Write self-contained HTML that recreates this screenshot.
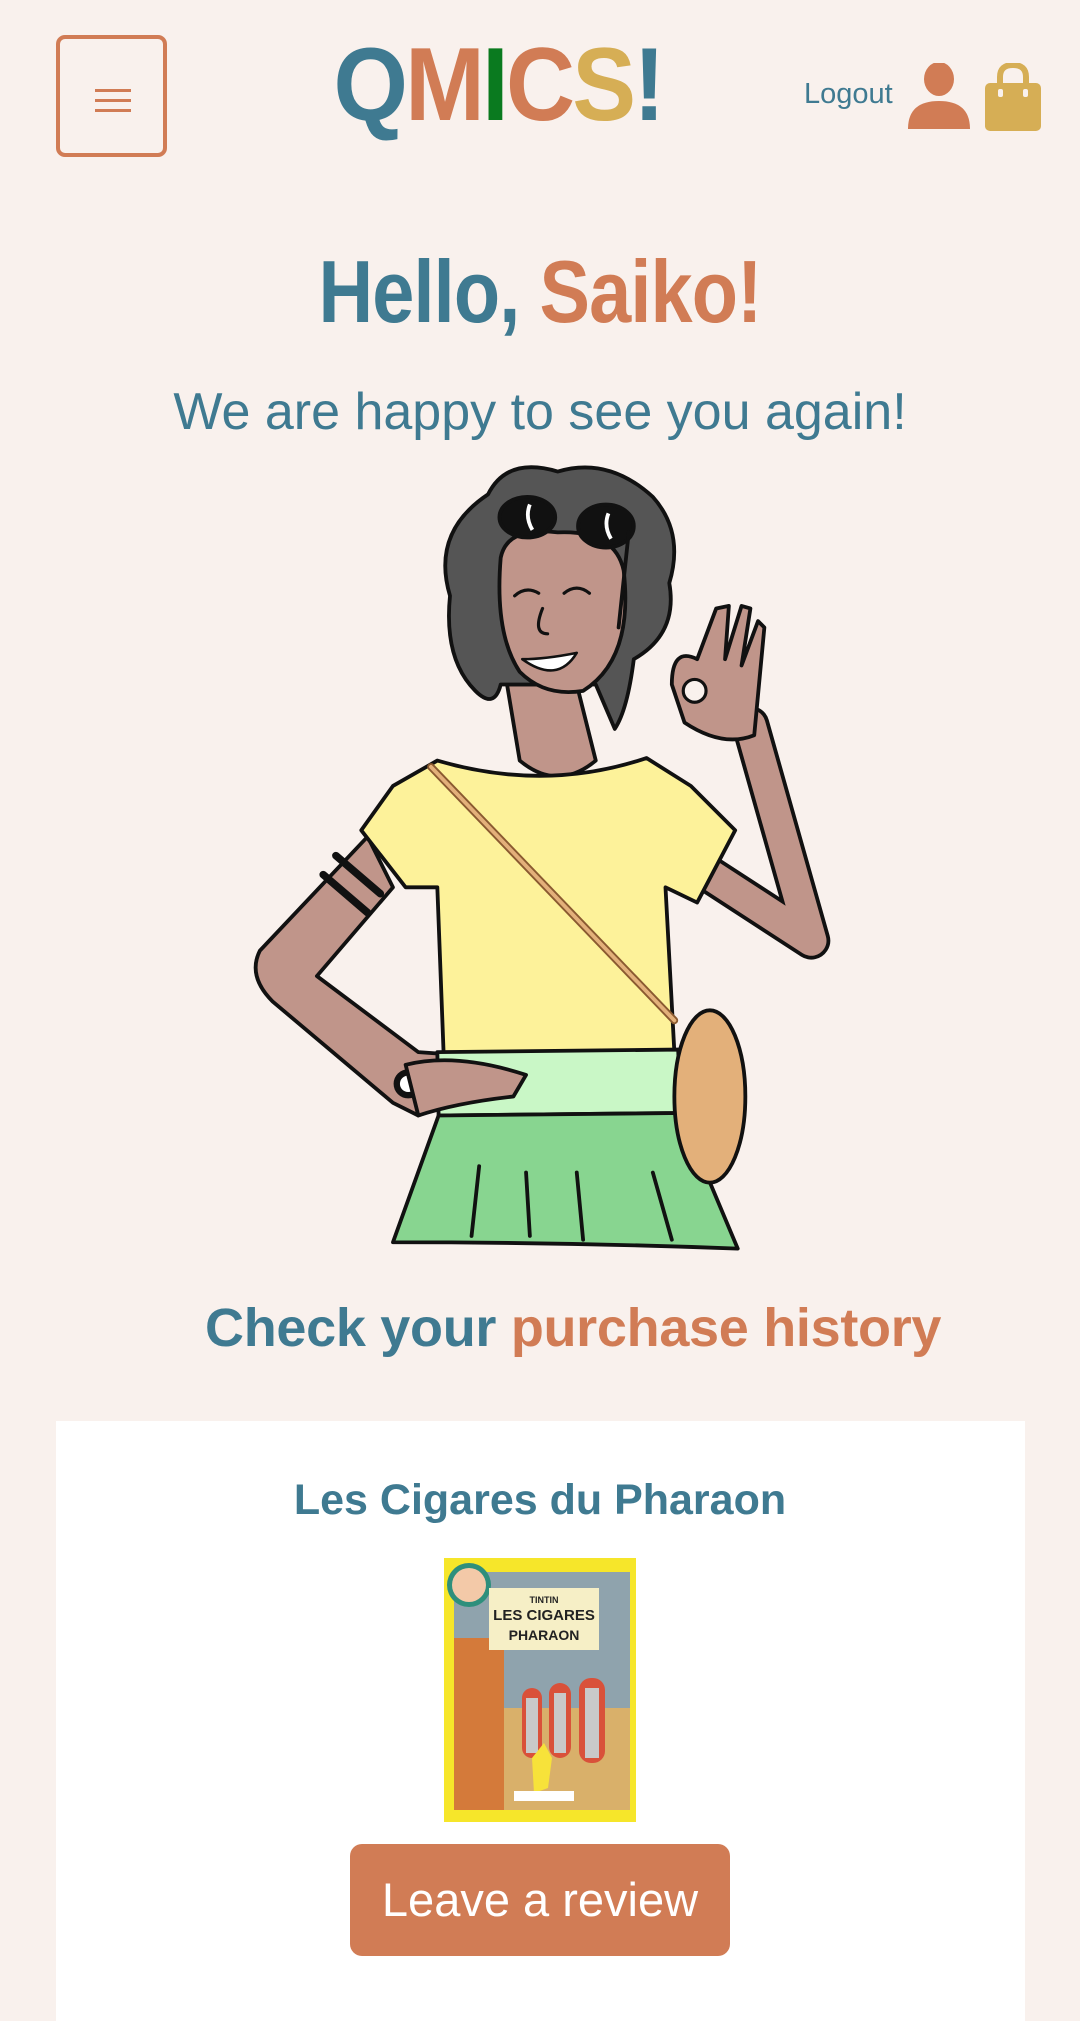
<!DOCTYPE html>
<html><head><meta charset="utf-8"><style>
*{margin:0;padding:0;box-sizing:border-box}
body{width:1080px;height:1988px;background:#f9f1ed;font-family:"Liberation Sans",sans-serif;position:relative;overflow:hidden}
.abs{position:absolute}
.menu{left:56px;top:35px;width:111px;height:122px;border:4px solid #d17c55;border-radius:9px}
.menu i{position:absolute;left:35px;width:36px;height:3px;background:#d17c55}
.logo{left:318px;top:30px;width:360px;text-align:center;font-weight:900;font-size:104px;letter-spacing:-3px;line-height:110px;transform:scaleX(0.92)}
.logout{left:804px;top:78px;font-size:29px;color:#3f7a91}
.hello{left:0;width:1080px;top:242px;text-align:center;font-weight:900;font-size:88px;line-height:100px;transform:scaleX(0.86);letter-spacing:-1px}
.sub{left:0;width:1080px;top:382px;text-align:center;font-size:52px;color:#3f7a91}
.check{left:205px;top:1297px;font-weight:bold;font-size:54px;color:#3f7a91;white-space:nowrap;letter-spacing:-0.3px}
.card{left:56px;top:1421px;width:969px;height:600px;background:#fff}
.title{left:0;width:1080px;top:1476px;text-align:center;font-weight:bold;font-size:43px;color:#3f7a91}
.btn{left:350px;top:1844px;width:380px;height:112px;background:#d17c55;border-radius:12px;color:#fff;font-size:47px;text-align:center;line-height:112px}
</style></head><body>
<div class="abs menu"><i style="top:50px"></i><i style="top:60px"></i><i style="top:70px"></i></div>
<div class="abs logo"><span style="color:#3f7a91">Q</span><span style="color:#d17c55">M</span><span style="color:#0a7a1f">I</span><span style="color:#d17c55">C</span><span style="color:#d6ae55">S</span><span style="color:#3f7a91">!</span></div>
<div class="abs logout">Logout</div>
<svg class="abs" style="left:906px;top:63px" width="66" height="66" viewBox="0 0 66 66"><ellipse cx="33" cy="16" rx="15" ry="17" fill="#d17c55"/><path d="M2 66 Q2 38 33 38 Q64 38 64 66Z" fill="#d17c55"/></svg>
<svg class="abs" style="left:985px;top:63px" width="56" height="68" viewBox="0 0 56 68"><path d="M15 22 V14 Q15 2 28 2 Q41 2 41 14 V22" fill="none" stroke="#d6ae55" stroke-width="6"/><rect x="0" y="20" width="56" height="48" rx="5" fill="#d6ae55"/><rect x="13" y="26" width="5" height="8" rx="2" fill="#f9f1ed"/><rect x="38" y="26" width="5" height="8" rx="2" fill="#f9f1ed"/></svg>
<div class="abs hello"><span style="color:#3f7a91">Hello, </span><span style="color:#d17c55">Saiko!</span></div>
<div class="abs sub">We are happy to see you again!</div>
<svg class="abs" style="left:0;top:0" width="1080" height="1988" viewBox="0 0 852 1568.3">
<g stroke="#111" stroke-width="3" stroke-linejoin="round" stroke-linecap="round">
<path d="M560 690 L640 742 L592 572" fill="none" stroke="#111" stroke-width="30"/>
<path d="M560 690 L640 742 L592 572" fill="none" stroke="#c0958a" stroke-width="24"/>
<path d="M530 540 Q530 510 550 520 L565 480 L575 478 L572 520 L585 478 L592 480 L585 525 L598 490 L603 495 L595 580 Q570 590 540 570 Z" fill="#c0958a"/>
<circle cx="548" cy="545" r="9" fill="#f9f1ed" stroke-width="2.5"/>
<path d="M290 660 L205 750 Q195 770 215 790 L310 870 L330 880 L410 850 L400 835 L330 830 L250 770 L310 700 Z" fill="#c0958a"/>
<path d="M255 690 L290 720 M265 675 L300 705" stroke-width="6"/>
<circle cx="322" cy="855" r="9" fill="#fff" stroke-width="5"/>
<path d="M400 540 L410 600 Q440 625 470 600 L455 540 Z" fill="#c0958a"/>
<path d="M345 600 Q430 625 510 598 L545 620 L580 655 L550 712 L525 700 L532 830 L350 832 L345 700 L320 700 L285 655 L310 620 Z" fill="#fdf29a"/>
<path d="M345 830 L535 828 L537 878 L346 880 Z" fill="#c9f7c6"/>
<path d="M346 880 L537 878 L582 985 Q450 980 310 980 Z" fill="#88d590"/>
<path d="M378 920 L372 975 M415 925 L418 975 M455 925 L460 978 M515 925 L530 978" fill="none"/>
<path d="M340 605 L532 805" stroke="#8a5a30" stroke-width="6"/>
<path d="M340 605 L532 805" stroke="#e3b07a" stroke-width="3"/>
<ellipse cx="560" cy="865" rx="28" ry="68" fill="#e3b07a"/>
<path d="M320 840 Q360 830 415 848 L405 865 Q360 870 330 880 Z" fill="#c0958a"/>
<path d="M385 390 Q400 360 440 372 Q480 360 515 392 Q540 420 528 460 Q535 500 500 520 Q495 560 485 575 L470 540 L395 540 Q390 560 375 545 Q350 520 355 470 Q340 420 385 390Z" fill="#555"/>
<path d="M395 440 Q400 415 440 420 Q485 418 492 450 Q500 520 460 545 Q430 550 410 530 Q390 500 395 440Z" fill="#c0958a"/>
<path d="M412 520 Q440 540 455 515 Q430 520 412 520Z" fill="#fff" stroke-width="2"/>
<path d="M406 470 Q415 462 425 468 M445 468 Q455 460 465 468 M428 480 Q420 500 432 500" fill="none" stroke-width="2.5"/>
<ellipse cx="416" cy="408" rx="22" ry="16" fill="#111"/><ellipse cx="478" cy="415" rx="22" ry="17" fill="#111"/>
<path d="M496 420 L488 495" fill="none" stroke-width="3"/>
</g>
<path d="M418 398 Q414 408 420 418 M480 405 Q476 415 482 425" stroke="#fff" stroke-width="3" fill="none"/>
</svg>
<div class="abs check">Check your <span style="color:#d17c55">purchase history</span></div>
<div class="abs card"></div>
<div class="abs title">Les Cigares du Pharaon</div>
<svg class="abs" style="left:444px;top:1558px" width="192" height="264" viewBox="0 0 192 264">
<rect width="192" height="264" fill="#f6e62a"/>
<rect x="10" y="14" width="176" height="238" fill="#8fa3ad"/>
<path d="M10 80 L60 80 L60 252 L10 252Z" fill="#d47a3a"/>
<path d="M60 150 L186 150 L186 252 L60 252Z" fill="#d9b06a"/>
<rect x="78" y="130" width="20" height="70" rx="10" fill="#d9513a"/><rect x="105" y="125" width="22" height="75" rx="11" fill="#d9513a"/><rect x="135" y="120" width="26" height="85" rx="12" fill="#d9513a"/>
<rect x="82" y="140" width="12" height="55" fill="#c9c9c9"/><rect x="110" y="135" width="12" height="60" fill="#c9c9c9"/><rect x="141" y="130" width="14" height="70" fill="#c9c9c9"/>
<circle cx="25" cy="27" r="22" fill="#2e8f7c"/><circle cx="25" cy="27" r="17" fill="#f3c9a8"/>
<rect x="45" y="30" width="110" height="62" fill="#f6efc6"/>
<text x="100" y="45" font-size="9" text-anchor="middle" font-family="Liberation Sans" font-weight="bold" fill="#222">TINTIN</text>
<text x="100" y="62" font-size="15" text-anchor="middle" font-family="Liberation Sans" font-weight="bold" fill="#222">LES CIGARES</text>
<text x="100" y="82" font-size="14" text-anchor="middle" font-family="Liberation Sans" font-weight="bold" fill="#222">PHARAON</text>
<path d="M88 200 L100 185 L108 200 L104 230 L90 235Z" fill="#f7e23a"/>
<rect x="70" y="233" width="60" height="10" fill="#fff"/>
</svg>
<div class="abs btn">Leave a review</div>
</body></html>
